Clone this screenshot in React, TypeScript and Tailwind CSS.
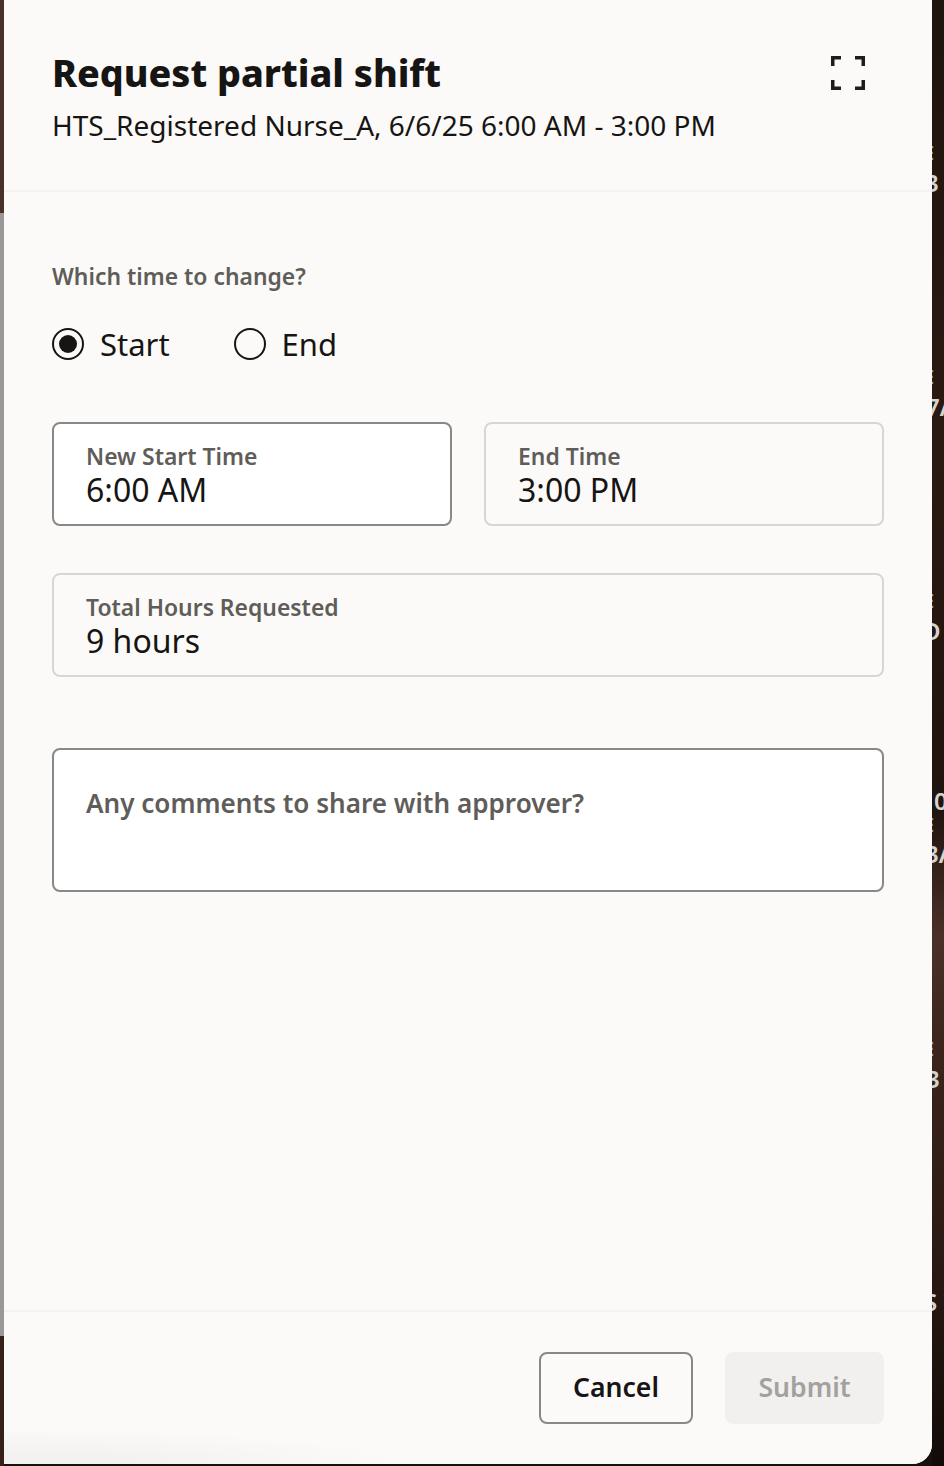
import React from "react";

// clipped bits of the page behind the drawer
const behindText = [
  { label: "E", className: "top-[144px] left-[-9px] text-[20px] leading-[18px] text-[#a9a6a3]" },
  { label: "3 I", className: "top-[172px] left-[-7px] text-[24px] leading-[22px] text-[#d6d3d0]" },
  { label: "E", className: "top-[368px] left-[-9px] text-[20px] leading-[18px] text-[#a9a6a3]" },
  { label: "7A", className: "top-[396px] left-[-6px] text-[24px] leading-[22px] text-[#d6d3d0]" },
  { label: "E", className: "top-[592px] left-[-9px] text-[20px] leading-[18px] text-[#a9a6a3]" },
  { label: "D I", className: "top-[620px] left-[-9px] text-[24px] leading-[22px] text-[#d6d3d0]" },
  { label: "0", className: "top-[790px] left-[2px] text-[24px] leading-[22px] text-[#d6d3d0]" },
  { label: "E", className: "top-[816px] left-[-9px] text-[20px] leading-[18px] text-[#a9a6a3]" },
  { label: "3A", className: "top-[843px] left-[-7px] text-[24px] leading-[22px] text-[#d6d3d0]" },
  { label: "E", className: "top-[1040px] left-[-9px] text-[20px] leading-[18px] text-[#a9a6a3]" },
  { label: "3", className: "top-[1068px] left-[-6px] text-[24px] leading-[22px] text-[#d6d3d0]" },
  { label: "S I", className: "top-[1291px] left-[-8px] text-[24px] leading-[22px] text-[#d6d3d0]" },
];

const Radio = ({ label, checked }: { label: string; checked?: boolean }) => (
  <label className="flex items-center gap-[16px]">
    <span className="flex h-[32px] w-[32px] items-center justify-center rounded-full border-2 border-[#161513] bg-[#fbfaf8]">
      {checked && <span className="h-[18px] w-[18px] rounded-full bg-[#161513]" />}
    </span>
    <span className="text-[31px] leading-[40px] text-[#161513]">{label}</span>
  </label>
);

const Field = ({ label, value, editable }: { label: string; value: string; editable?: boolean }) => (
  <div
    className={`h-[104px] rounded-[8px] px-[32px] pt-[17px] ${
      editable ? "border-2 border-[#8a8886] bg-white" : "border-2 border-[#d8d6d3] bg-[#fbfaf8]"
    }`}
  >
    <div className="text-[22.9px] leading-[32px] font-semibold text-[#5f5d5a]">{label}</div>
    <div className="text-[32px] leading-[34px] text-[#161513]">{value}</div>
  </div>
);

export default function App() {
  return (
    <div
      className="relative flex h-[1466px] w-[944px] overflow-hidden bg-[#1a100b]"
      style={{ fontFamily: '"Noto Sans", "Open Sans", sans-serif' }}
    >
      {/* left edge */}
      <div className="flex w-[4px] shrink-0 flex-col">
        <div className="h-[213px] bg-[#4a3128]" />
        <div className="h-[1123px] bg-[#9a9896]" />
        <div className="flex-1 bg-[#35211a]" />
      </div>

      {/* drawer */}
      <div className="flex h-[1464px] w-[928px] shrink-0 flex-col rounded-br-[20px] bg-[#fbfaf8]">
        <div className="relative h-[192px] shrink-0 border-b-2 border-[#f3f2f0] pl-[48px] pt-[47px]">
          <h1 className="text-[37.6px] leading-[52px] font-extrabold text-[#161513]">Request partial shift</h1>
          <p className="mt-[7px] text-[28px] leading-[38px] text-[#161513]">
            HTS_Registered Nurse_A, 6/6/25 6:00 AM - 3:00 PM
          </p>
          <svg
            className="absolute left-[827px] top-[56px] h-[34px] w-[34px]"
            viewBox="0 0 34 34"
            fill="none"
            stroke="#1f1d1b"
            strokeWidth="3.5"
          >
            <path d="M1.75 10V1.75H10M24 1.75h8.25V10M1.75 24v8.25H10M24 32.25h8.25V24" />
          </svg>
        </div>

        <div className="flex-1 px-[48px] pt-[69px]">
          <div className="text-[22.9px] leading-[32px] font-semibold text-[#5f5d5a]">Which time to change?</div>
          <div className="mt-[31px] flex gap-[64px]">
            <Radio label="Start" checked />
            <Radio label="End" />
          </div>
          <div className="mt-[58px] grid grid-cols-2 gap-[32px]">
            <Field label="New Start Time" value="6:00 AM" editable />
            <Field label="End Time" value="3:00 PM" />
          </div>
          <div className="mt-[47px]">
            <Field label="Total Hours Requested" value="9 hours" />
          </div>
          <div className="mt-[71px] h-[144px] rounded-[8px] border-2 border-[#8a8886] bg-white px-[32px] pt-[35px] text-[26.1px] leading-[36px] font-semibold text-[#5f5d5a]">
            Any comments to share with approver?
          </div>
        </div>

        <div className="flex h-[154px] shrink-0 items-start justify-end gap-[32px] rounded-br-[20px] border-t-2 border-[#f3f2f0] bg-[radial-gradient(ellipse_400px_36px_at_0%_100%,#f3f2f0_30%,#fbfaf8_100%)] px-[48px] pt-[40px]">
          <button className="h-[72px] w-[154px] rounded-[8px] border-2 border-[#8a8886] text-[26.6px] font-semibold text-[#161513]">
            Cancel
          </button>
          <button className="h-[72px] w-[159px] rounded-[8px] bg-[#f1f0ee] text-[26.6px] font-semibold text-[#a3a19f]">
            Submit
          </button>
        </div>
      </div>

      {/* right edge, page showing behind the drawer */}
      <div className="relative h-full flex-1 overflow-hidden bg-[linear-gradient(to_bottom,#1f140e_0%,#2a1a12_30%,#20140e_55%,#4a3028_64%,#3a241c_72%,#2c1b14_85%,#120b08_100%)] font-semibold">
        {behindText.map((t, i) => (
          <span key={i} className={`absolute whitespace-nowrap ${t.className}`}>
            {t.label}
          </span>
        ))}
      </div>
    </div>
  );
}
